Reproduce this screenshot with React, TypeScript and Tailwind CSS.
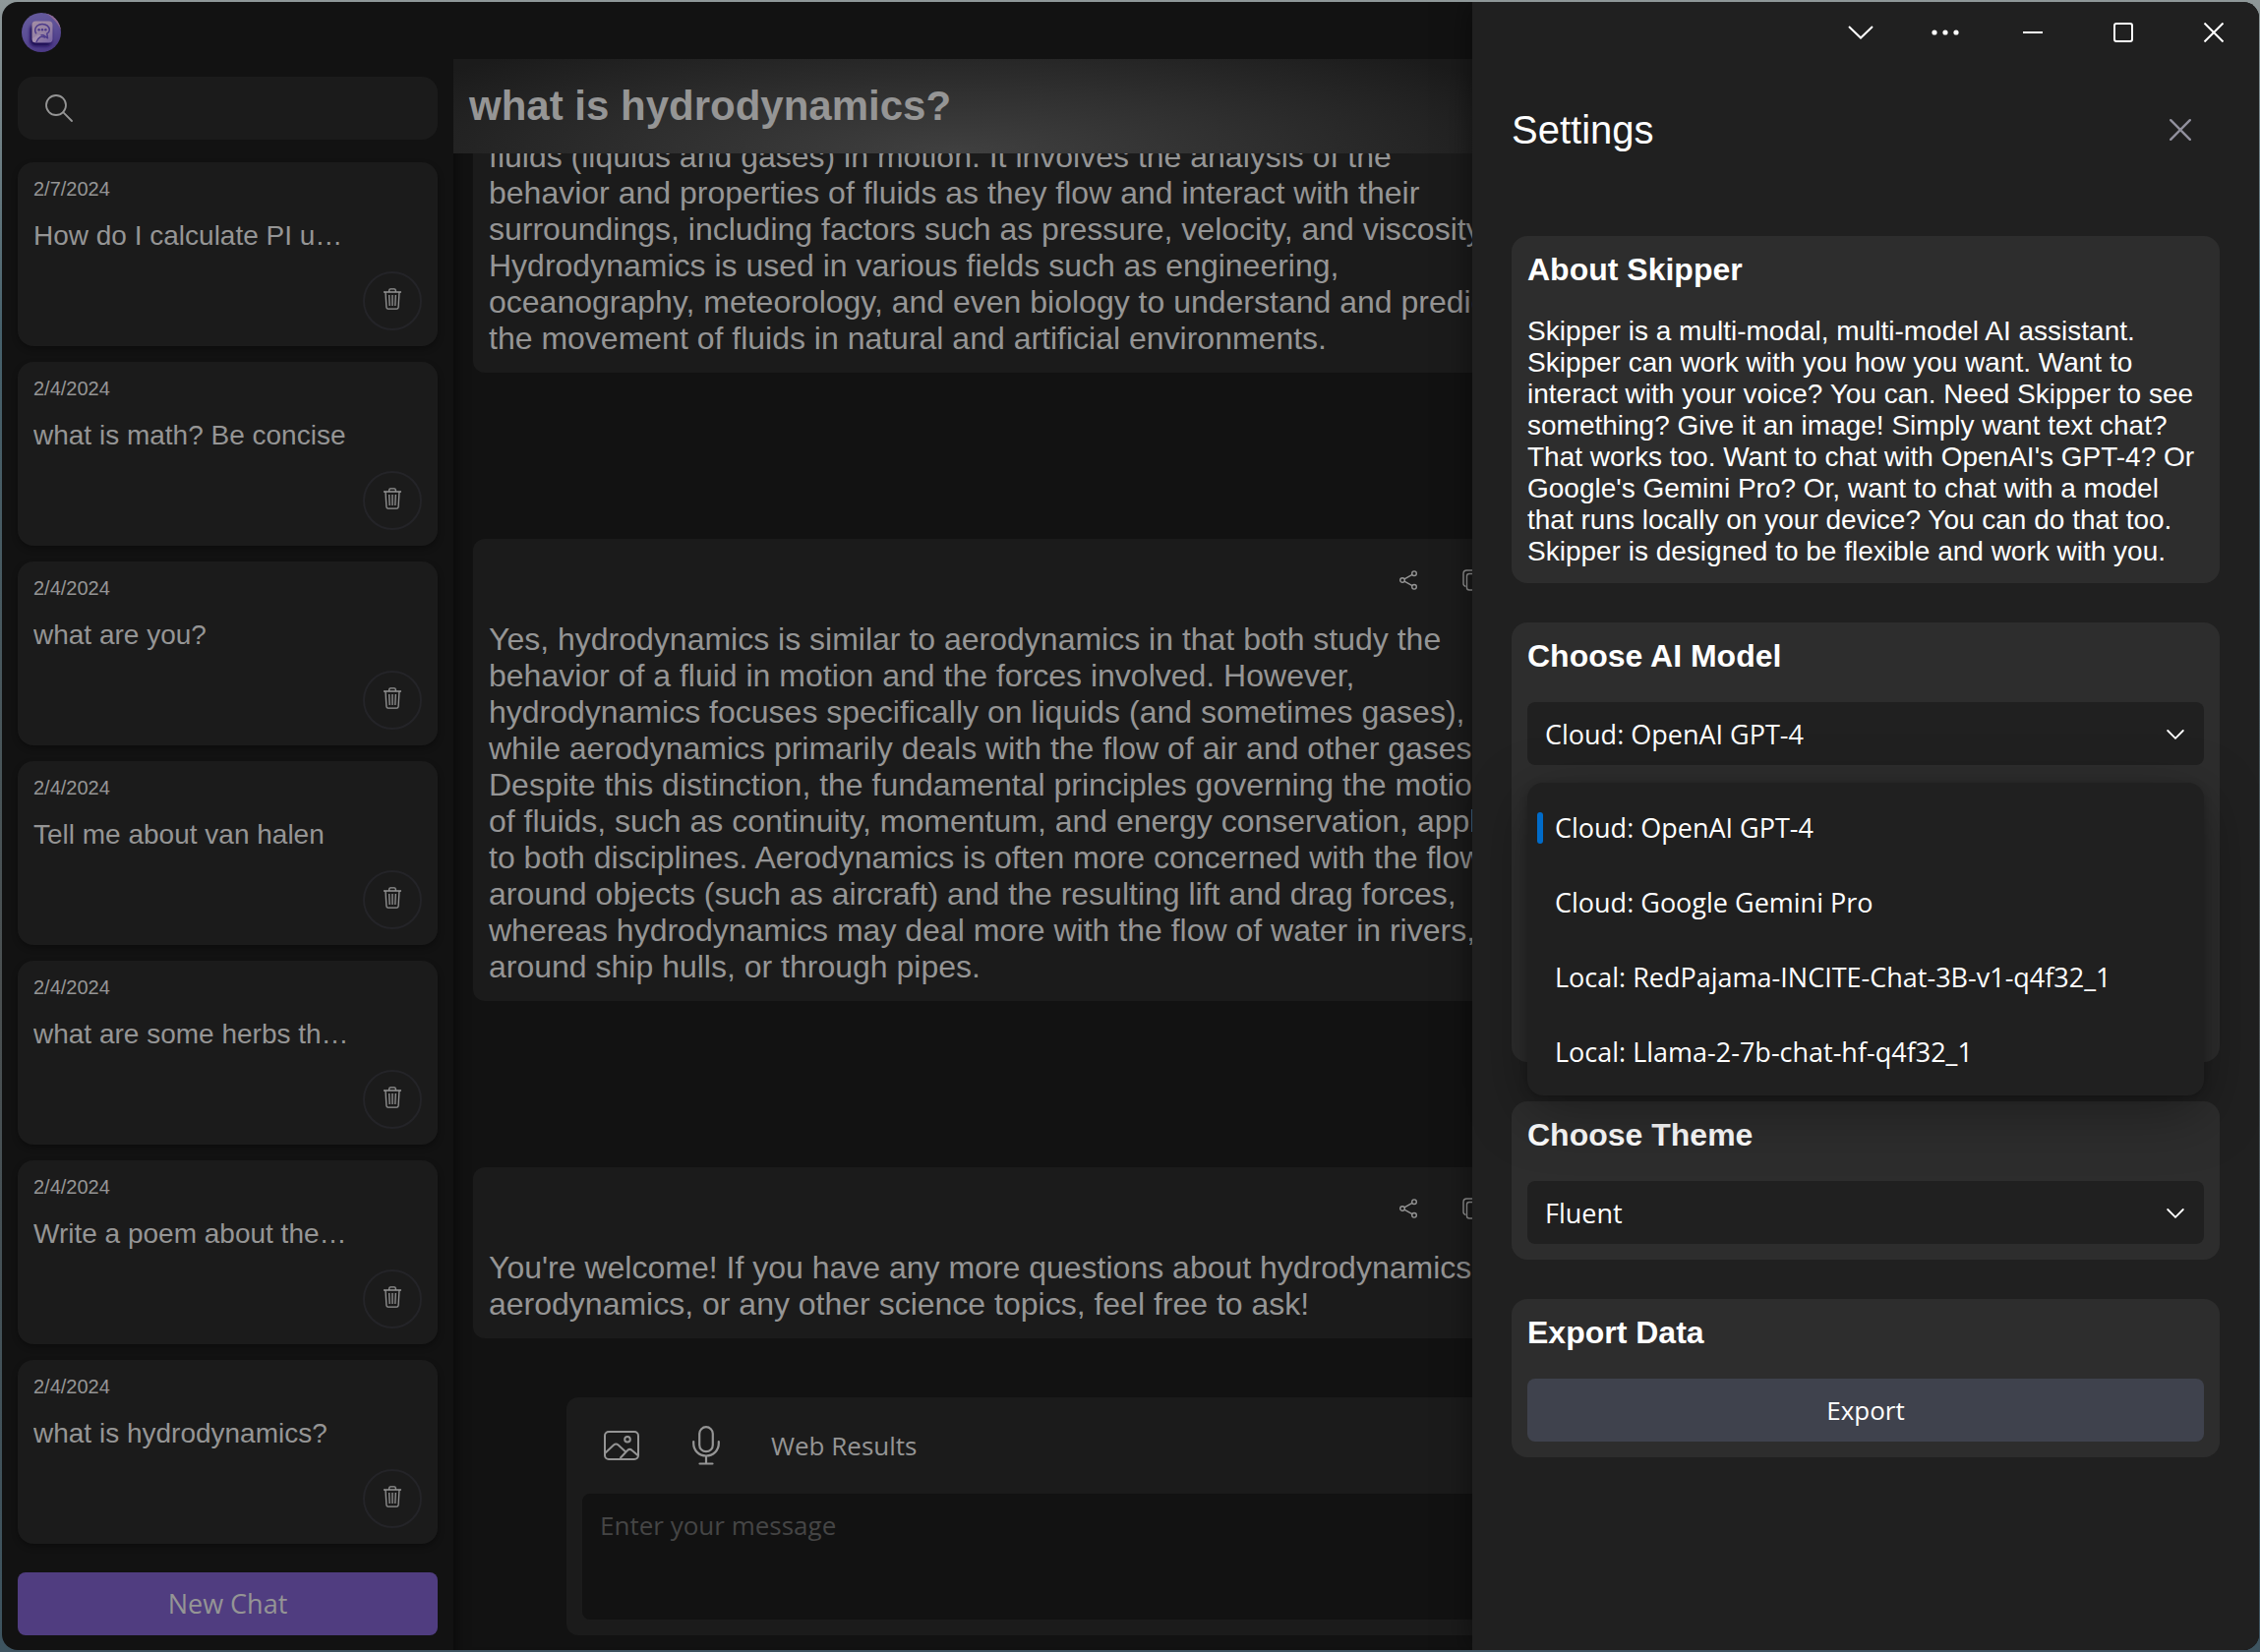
import React, { useState } from "react";

const HISTORY = [
  { date: "2/7/2024", title: "How do I calculate PI u…" },
  { date: "2/4/2024", title: "what is math? Be concise" },
  { date: "2/4/2024", title: "what are you?" },
  { date: "2/4/2024", title: "Tell me about van halen" },
  { date: "2/4/2024", title: "what are some herbs th…" },
  { date: "2/4/2024", title: "Write a poem about the…" },
  { date: "2/4/2024", title: "what is hydrodynamics?" },
];

const MESSAGES = [
  "fluids (liquids and gases) in motion. It involves the analysis of the behavior and properties of fluids as they flow and interact with their surroundings, including factors such as pressure, velocity, and viscosity. Hydrodynamics is used in various fields such as engineering, oceanography, meteorology, and even biology to understand and predict the movement of fluids in natural and artificial environments.",
  "Yes, hydrodynamics is similar to aerodynamics in that both study the behavior of a fluid in motion and the forces involved. However, hydrodynamics focuses specifically on liquids (and sometimes gases), while aerodynamics primarily deals with the flow of air and other gases. Despite this distinction, the fundamental principles governing the motion of fluids, such as continuity, momentum, and energy conservation, apply to both disciplines. Aerodynamics is often more concerned with the flow around objects (such as aircraft) and the resulting lift and drag forces, whereas hydrodynamics may deal more with the flow of water in rivers, around ship hulls, or through pipes.",
  "You're welcome! If you have any more questions about hydrodynamics, aerodynamics, or any other science topics, feel free to ask!",
];

const MODELS = [
  "Cloud: OpenAI GPT-4",
  "Cloud: Google Gemini Pro",
  "Local: RedPajama-INCITE-Chat-3B-v1-q4f32_1",
  "Local: Llama-2-7b-chat-hf-q4f32_1",
];

const SANS = "font-['Liberation_Sans',Arial,sans-serif]";
const UI = "font-['Open_Sans','Noto_Sans',sans-serif]";

function Logo() {
  return (
    <svg viewBox="0 0 40 40" className="size-10" aria-hidden="true">
      <defs>
        <linearGradient id="disc" x1="0" y1="0" x2="0.3" y2="1">
          <stop offset="0" stopColor="#665c9c" />
          <stop offset="0.6" stopColor="#5c4e96" />
          <stop offset="1" stopColor="#4c3a86" />
        </linearGradient>
        <linearGradient id="tile" x1="0.2" y1="0" x2="0.8" y2="1">
          <stop offset="0" stopColor="#a18ca4" />
          <stop offset="0.6" stopColor="#9480a4" />
          <stop offset="1" stopColor="#7a67a4" />
        </linearGradient>
        <filter id="soft" x="-30%" y="-30%" width="160%" height="160%">
          <feGaussianBlur stdDeviation="1.6" />
        </filter>
        <clipPath id="round">
          <circle cx="20" cy="20" r="20" />
        </clipPath>
      </defs>
      <g clipPath="url(#round)">
        <rect width="40" height="40" fill="url(#disc)" />
        <path d="M23 0c6 2 12 8 17 17V0z" fill="#8f6a93" />
        <rect x="8.500" y="12" width="22" height="22" rx="5" fill="#1d0d55" filter="url(#soft)" />
        <rect x="10.500" y="8.500" width="21" height="22" rx="4" fill="url(#tile)" />
        <path
          d="M21 11.500c-4.200 0-7.300 2.700-7.300 6.200 0 1.400.5 2.600 1.300 3.600M19.500 22.800h2.700l4.300 3-.7-4.700c1.600-1 2.500-2.100 2.500-3.700 0-3.400-3.100-5.900-7.300-5.900"
          fill="none"
          stroke="#4c3a8a"
          strokeWidth="1.500"
          strokeLinejoin="round"
        />
        <path d="M11 26l6-3.800 2.300 1.600-4.500 6.200h-2.300a2 2 0 0 1-1.500-2z" fill="#a48fb0" />
        <path d="M14.800 30c1-2.500 2.300-4.300 4.200-5.300 1.500-.5 3-.3 5 .6" fill="none" stroke="#4c3a8a" strokeWidth="1.300" />
        <circle cx="17.600" cy="17.200" r="1.200" fill="#4c3a8a" />
        <circle cx="21" cy="17.200" r="1.200" fill="#4c3a8a" />
        <circle cx="24.400" cy="17.200" r="1.200" fill="#4c3a8a" />
      </g>
    </svg>
  );
}

function TrashIcon() {
  return (
    <svg viewBox="0 0 18 22" className="h-[22px] w-[18px]" fill="none" stroke="currentColor" strokeWidth="1.300" aria-hidden="true">
      <path d="M0 4h18M5.700 4V2.200C5.700 1.300 6.300.8 7 .8h4c.7 0 1.300.5 1.300 1.400V4" />
      <path d="M2 4l.9 15.500c.1 1 .7 1.700 1.700 1.700h8.800c1 0 1.600-.7 1.700-1.700L16 4M5.700 7l.5 11M9 7v11M12.300 7l-.5 11" />
    </svg>
  );
}

function ShareIcon() {
  return (
    <svg viewBox="0 0 18 20" className="h-5 w-[18px]" fill="none" stroke="currentColor" strokeWidth="1.400" aria-hidden="true">
      <circle cx="3" cy="10" r="2.300" />
      <circle cx="15" cy="3.200" r="2.300" />
      <circle cx="15" cy="16.800" r="2.300" />
      <path d="M5 8.800l8-4.500M5 11.200l8 4.500" />
    </svg>
  );
}

function CopyIcon() {
  return (
    <svg viewBox="0 0 18 22" className="h-[22px] w-[18px]" fill="none" stroke="currentColor" strokeWidth="1.400" aria-hidden="true">
      <path d="M3.500 17.500C2 17 1 16 1 14.500V4.500C1 2.500 2.500 1 4.500 1h7C13 1 14 1.600 14.500 2.800" />
      <rect x="4.500" y="4.500" width="12.500" height="16.500" rx="2.500" />
    </svg>
  );
}

function SelectChevron() {
  return (
    <svg
      viewBox="0 0 18 10"
      className="pointer-events-none absolute top-7 right-5 h-[10px] w-[18px]"
      fill="none"
      stroke="#fff"
      strokeWidth="1.800"
      strokeLinecap="round"
      aria-hidden="true"
    >
      <path d="M1.200 1L9 8.800 16.800 1" />
    </svg>
  );
}

function HistoryCard({ date, title }: { date: string; title: string }) {
  return (
    <li className="flex h-[187px] flex-col rounded-2xl bg-[#1b1b1b] p-4 shadow-[0_3px_6px_rgba(0,0,0,0.3)]">
      <time className="text-[20px] leading-[22px]">{date}</time>
      <h3 className="mt-[21px] truncate text-[28px] leading-8">{title}</h3>
      <button
        type="button"
        aria-label="Delete chat"
        className="mt-auto flex size-15 shrink-0 items-center justify-center self-end rounded-full border-2 border-[#242428] pb-1"
      >
        <TrashIcon />
      </button>
    </li>
  );
}

function Message({ text }: { text: string }) {
  return (
    <article className="shrink-0 rounded-xl bg-[#1b1b1b] px-4 pb-4">
      <div className="flex h-[84px] justify-end">
        <button type="button" aria-label="Share" className="flex w-16 items-center justify-center">
          <ShareIcon />
        </button>
        <button type="button" aria-label="Copy" className="flex w-16 items-center justify-center">
          <CopyIcon />
        </button>
      </div>
      <p className="text-[32px] leading-[37px]">{text}</p>
    </article>
  );
}

function Section({ title, className, children }: { title: string; className?: string; children: React.ReactNode }) {
  return (
    <section className={`relative rounded-2xl bg-[#2d2d2d] p-4 text-white ${className ?? ""}`}>
      <h3 className="mb-[29px] text-[32px] leading-9 font-bold">{title}</h3>
      {children}
    </section>
  );
}

function Sidebar() {
  return (
    <aside className="flex w-[459px] shrink-0 flex-col px-4 pt-[18px] pb-[15px]">
      <label className="flex h-16 items-center rounded-2xl bg-[#1b1b1b] px-7">
        <svg viewBox="0 0 28 28" className="size-7" fill="none" stroke="currentColor" strokeWidth="1.800" strokeLinecap="round" aria-hidden="true">
          <circle cx="11" cy="11" r="10" />
          <path d="M18.200 18.200L27 27" />
        </svg>
        <input type="search" aria-label="Search chats" className="ml-4 min-w-0 flex-1 bg-transparent text-[28px] outline-none" />
      </label>
      <ul className="mt-[23px] flex flex-1 flex-col gap-4">
        {HISTORY.map((h) => (
          <HistoryCard key={h.title} {...h} />
        ))}
      </ul>
      <button type="button" className={`${UI} h-16 rounded-lg bg-[#503d80] text-[27px] text-[#959595]`}>
        New Chat
      </button>
    </aside>
  );
}

function Chat() {
  return (
    <main className="flex min-w-0 flex-1 flex-col shadow-[inset_16px_0_16px_-16px_rgba(0,0,0,0.6)]">
      <header className="flex h-24 shrink-0 items-center bg-[radial-gradient(ellipse_640px_140px_at_510px_100%,#404040_0%,#303030_45%,#1b1b1b_100%)] px-4">
        <h1 className="text-[42px] leading-[48px] font-bold">what is hydrodynamics?</h1>
      </header>
      <div className="ml-5 flex w-[1063px] min-h-0 flex-1 flex-col justify-end gap-[169px] overflow-hidden">
        {MESSAGES.map((m) => (
          <Message key={m.slice(0, 8)} text={m} />
        ))}
      </div>
      <form className={`${UI} mx-[115px] mt-[60px] mb-[15px] shrink-0 rounded-xl bg-[#1b1b1b] px-4 pb-4 text-[26px]`}>
        <div className="flex h-[98px] items-center">
          <button type="button" aria-label="Add image" className="flex w-20 justify-center">
            <svg viewBox="0 0 36 30" className="h-[30px] w-9" fill="none" stroke="currentColor" strokeWidth="2" strokeLinejoin="round" aria-hidden="true">
              <rect x="1" y="1" width="34" height="28" rx="4" />
              <circle cx="24" cy="8.800" r="2.800" />
              <path d="M1.500 22.500L10 14.600c1.700-1.500 3-1.500 4.700 0l7 6.400M16.500 28l7.500-8c1.700-1.600 3-1.600 4.700 0l5.800 5" />
            </svg>
          </button>
          <button type="button" aria-label="Record voice" className="flex w-[92px] justify-center">
            <svg viewBox="0 0 28 40" className="h-10 w-7" fill="none" stroke="currentColor" strokeWidth="2.200" strokeLinecap="round" aria-hidden="true">
              <rect x="7.200" y="1.200" width="13.600" height="25" rx="6.800" />
              <path d="M1.200 16v2c0 7 5.500 12.500 12.800 12.500S26.800 25 26.800 18v-2M14 30.500V38M7.500 38.500h13" />
            </svg>
          </button>
          <button type="button" className="ml-5">
            Web Results
          </button>
        </div>
        <textarea
          aria-label="Message"
          placeholder="Enter your message"
          className="block h-32 w-full resize-none rounded-lg bg-[#121212] px-[18px] py-3 leading-10 outline-none placeholder:text-[#454545]"
        />
      </form>
    </main>
  );
}

function WindowControls() {
  const stroke = { fill: "none", stroke: "#fff", strokeWidth: 2, "aria-hidden": true } as const;
  return (
    <div className="flex h-[62px] items-center justify-end">
      <button type="button" aria-label="More tools" className="flex w-[86px] justify-center">
        <svg viewBox="0 0 26 14" className="h-[14px] w-[26px]" {...stroke}>
          <path d="M1 1l12 11.500L25 1" />
        </svg>
      </button>
      <button type="button" aria-label="Menu" className="flex w-[86px] justify-center">
        <svg viewBox="0 0 28 6" className="h-[6px] w-7" fill="#fff" aria-hidden="true">
          <circle cx="3" cy="3" r="2.600" />
          <circle cx="14" cy="3" r="2.600" />
          <circle cx="25" cy="3" r="2.600" />
        </svg>
      </button>
      <button type="button" aria-label="Minimize" className="flex w-[92px] justify-center">
        <svg viewBox="0 0 20 20" className="size-5" {...stroke}>
          <path d="M0 10h20" />
        </svg>
      </button>
      <button type="button" aria-label="Maximize" className="flex w-[92px] justify-center">
        <svg viewBox="0 0 20 20" className="size-5" {...stroke}>
          <rect x="1" y="1" width="18" height="18" rx="2" />
        </svg>
      </button>
      <button type="button" aria-label="Close window" className="flex w-[92px] justify-center">
        <svg viewBox="0 0 20 20" className="size-5" {...stroke}>
          <path d="M.5.5l19 19M19.500.5l-19 19" />
        </svg>
      </button>
    </div>
  );
}

function Settings() {
  const [model, setModel] = useState(MODELS[0]);
  const field =
    "h-16 w-full appearance-none rounded-lg bg-[#202020] px-[18px] pt-0.5 text-[27px] text-white outline-none";
  return (
    <aside
      aria-label="Settings"
      className="absolute inset-y-0 right-0 w-[800px] bg-[#202020] shadow-[0_0_30px_rgba(0,0,0,0.5)]"
    >
      <WindowControls />
      <div className="px-10">
        <div className="flex h-[136px] items-center justify-between text-white">
          <h2 className="text-[40px] leading-[46px]">Settings</h2>
          <button type="button" aria-label="Close settings" className="mr-[29px] text-[#908f9c]">
            <svg viewBox="0 0 22 22" className="size-[22px]" fill="none" stroke="currentColor" strokeWidth="2.400" strokeLinecap="round" aria-hidden="true">
              <path d="M1.200 1.200l19.600 19.600M20.800 1.200L1.200 20.800" />
            </svg>
          </button>
        </div>
        <div className="mt-10 flex flex-col gap-10">
          <Section title="About Skipper">
            <p className="text-[28px] leading-8">
              Skipper is a multi-modal, multi-model AI assistant. Skipper can work with you how you want. Want to
              interact with your voice? You can. Need Skipper to see something? Give it an image! Simply want text
              chat? That works too. Want to chat with OpenAI's GPT-4? Or Google's Gemini Pro? Or, want to chat with a
              model that runs locally on your device? You can do that too. Skipper is designed to be flexible and work
              with you.
            </p>
          </Section>
          <Section title="Choose AI Model" className="z-10 h-[447px]">
            <div className="relative">
              <select aria-label="AI model" value={model} onChange={(e) => setModel(e.target.value)} className={`${UI} ${field}`}>
                {MODELS.map((m) => (
                  <option key={m}>{m}</option>
                ))}
              </select>
              <SelectChevron />
              <ul
                role="listbox"
                aria-label="AI models"
                className={`${UI} absolute inset-x-0 top-full mt-[18px] rounded-2xl bg-[#202020] px-[10px] pt-2 pb-[6px] text-[27px] shadow-[0_16px_60px_rgba(0,0,0,0.35),0_2px_8px_rgba(0,0,0,0.2)]`}
              >
                {MODELS.map((m) => (
                  <li
                    key={m}
                    role="option"
                    aria-selected={m === model}
                    onClick={() => setModel(m)}
                    className="flex h-19 items-center gap-3 whitespace-nowrap"
                  >
                    <span className={m === model ? "h-8 w-[6px] rounded-full bg-[#006bc9]" : "h-8 w-[6px]"} />
                    {m}
                  </li>
                ))}
              </ul>
            </div>
          </Section>
          <Section title="Choose Theme">
            <div className="relative">
              <select aria-label="Theme" className={`${UI} ${field}`}>
                <option>Fluent</option>
              </select>
              <SelectChevron />
            </div>
          </Section>
          <Section title="Export Data">
            <button type="button" className={`${UI} block h-16 w-full rounded-lg bg-[#3f424d] text-[26px]`}>
              Export
            </button>
          </Section>
        </div>
      </div>
    </aside>
  );
}

export default function App() {
  return (
    <div className={`${SANS} h-screen bg-[linear-gradient(to_bottom,#8f9899,#46616c_20%,#4a4f50_60%,#3d5460)] py-0.5 pr-px pl-0.5 text-[#959595]`}>
      <div className="relative flex h-full flex-col overflow-hidden rounded-2xl bg-[#121212]">
        <div className="flex h-[58px] shrink-0 items-center pt-1 pl-5">
          <Logo />
        </div>
        <div className="flex min-h-0 flex-1">
          <Sidebar />
          <Chat />
        </div>
        <Settings />
      </div>
    </div>
  );
}
